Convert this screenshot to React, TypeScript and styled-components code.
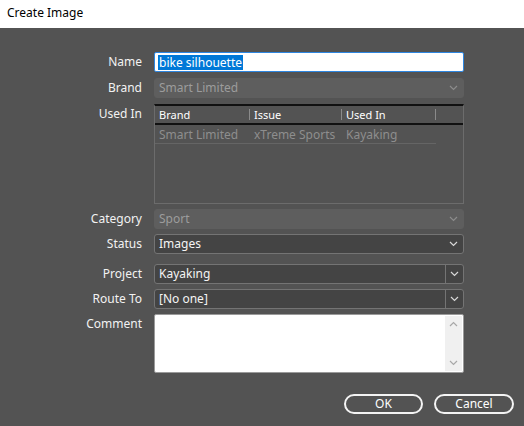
import React from "react";
import styled, { createGlobalStyle } from "styled-components";

const Global = createGlobalStyle`
  html, body { margin: 0; padding: 0; background: #535353; }
  body { font-family: "Noto Sans", "Open Sans", sans-serif; font-size: 12px; }
  * { box-sizing: border-box; }
`;

const Window = styled.div`
  width: 524px;
  height: 426px;
  display: flex;
  flex-direction: column;
  background: #535353;
  overflow: hidden;
`;

const TitleBar = styled.div`
  height: 28px;
  background: #ffffff;
  color: #000;
  display: flex;
  align-items: center;
  padding: 0 0 3px 7px;
  font-size: 12px;
`;

const Form = styled.div`
  display: grid;
  grid-template-columns: 142px 310px;
  column-gap: 12px;
  padding-top: 24px;
`;

const Label = styled.div<{ $mt?: number }>`
  margin-top: ${(p) => p.$mt ?? 0}px;
  text-align: right;
  color: #f2f2f2;
  line-height: 20px;
  height: 20px;
  white-space: nowrap;
`;

const Field = styled.div<{ $mt?: number }>`
  margin-top: ${(p) => p.$mt ?? 0}px;
`;

const NameInput = styled.div`
  height: 20px;
  background: #fff;
  border: 1px solid #2e86e0;
  border-radius: 2px;
  display: flex;
  align-items: center;
  padding-left: 3px;
`;

const Selected = styled.span`
  background: #0078d7;
  color: #fff;
  line-height: 15px;
  padding: 0 1px;
`;

const Select = styled.div<{ $disabled?: boolean }>`
  height: 20px;
  display: flex;
  align-items: center;
  border-radius: 3px;
  background: ${(p) => (p.$disabled ? "#5e5e5e" : "#444444")};
  border: 1px solid ${(p) => (p.$disabled ? "#5e5e5e" : "#747474")};
  color: ${(p) => (p.$disabled ? "#9c9c9c" : "#f4f4f4")};
  padding-left: 4px;
`;

const SelectText = styled.div`
  flex: 1;
  line-height: 18px;
`;

const Arrow = styled.div<{ $split?: boolean; $dim?: boolean }>`
  width: ${(p) => (p.$split ? 18 : 20)}px;
  height: 100%;
  display: flex;
  align-items: center;
  justify-content: center;
  border-left: ${(p) => (p.$split ? "1px solid #747474" : "none")};
  color: ${(p) => (p.$dim ? "#8c8c8c" : "#d8d8d8")};
`;

const Chevron = ({ up }: { up?: boolean }) => (
  <svg width="9" height="6" viewBox="0 0 9 6">
    <path
      d={up ? "M1 5 L4.5 1.5 L8 5" : "M1 1 L4.5 4.5 L8 1"}
      fill="none"
      stroke="currentColor"
      strokeWidth="1.2"
    />
  </svg>
);

const Table = styled.div`
  height: 100px;
  border: 1px solid #6c6c6c;
  border-top: 2px solid #111;
  background: #535353;
`;

const HeaderRow = styled.div`
  display: grid;
  grid-template-columns: 95px 92px 94px;
  height: 19px;
  border-bottom: 2px solid #111;
`;

const HeaderCell = styled.div`
  color: #ffffff;
  font-size: 11px;
  line-height: 17px;
  padding-left: 4px;
  position: relative;
  &::after {
    content: "";
    position: absolute;
    right: 0;
    top: 3px;
    bottom: 3px;
    width: 1px;
    background: #8a8a8a;
  }
`;

const DataRow = styled.div`
  display: grid;
  grid-template-columns: 95px 92px 94px;
  width: 281px;
  height: 19px;
  border-bottom: 1px solid #656565;
`;

const DataCell = styled.div`
  color: #8e8e8e;
  line-height: 19px;
  padding-left: 4px;
  white-space: nowrap;
`;

const TextArea = styled.div`
  height: 59px;
  background: #fff;
  border: 1px solid #9a9a9a;
  border-radius: 2px;
  display: flex;
  justify-content: flex-end;
`;

const ScrollBar = styled.div`
  width: 17px;
  margin: 1px 1px 1px 0;
  background: #f0f0f0;
  display: flex;
  flex-direction: column;
  justify-content: space-between;
  align-items: center;
  padding: 5px 0;
  color: #a8a8a8;
`;

const Footer = styled.div`
  display: flex;
  justify-content: flex-end;
  gap: 11px;
  padding: 21px 10px 0 0;
`;

const Button = styled.button<{ $w: number }>`
  width: ${(p) => p.$w}px;
  height: 20px;
  border: 2px solid #f4f4f4;
  border-radius: 10px;
  background: transparent;
  color: #fff;
  font-family: "Noto Sans", "Open Sans", sans-serif;
  font-size: 12px;
  line-height: 14px;
  padding: 0;
`;

export default function App() {
  return (
    <Window>
      <Global />
      <TitleBar>Create Image</TitleBar>
      <Form>
        <Label>Name</Label>
        <Field>
          <NameInput>
            <Selected>bike silhouette</Selected>
          </NameInput>
        </Field>

        <Label $mt={6}>Brand</Label>
        <Field $mt={6}>
          <Select $disabled>
            <SelectText>Smart Limited</SelectText>
            <Arrow $dim>
              <Chevron />
            </Arrow>
          </Select>
        </Field>

        <Label $mt={6}>Used In</Label>
        <Field $mt={6}>
          <Table>
            <HeaderRow>
              <HeaderCell>Brand</HeaderCell>
              <HeaderCell>Issue</HeaderCell>
              <HeaderCell>Used In</HeaderCell>
            </HeaderRow>
            <DataRow>
              <DataCell>Smart Limited</DataCell>
              <DataCell>xTreme Sports</DataCell>
              <DataCell>Kayaking</DataCell>
            </DataRow>
          </Table>
        </Field>

        <Label $mt={5}>Category</Label>
        <Field $mt={5}>
          <Select $disabled>
            <SelectText>Sport</SelectText>
            <Arrow $dim>
              <Chevron />
            </Arrow>
          </Select>
        </Field>

        <Label $mt={5}>Status</Label>
        <Field $mt={5}>
          <Select>
            <SelectText>Images</SelectText>
            <Arrow>
              <Chevron />
            </Arrow>
          </Select>
        </Field>

        <Label $mt={10}>Project</Label>
        <Field $mt={10}>
          <Select>
            <SelectText>Kayaking</SelectText>
            <Arrow $split>
              <Chevron />
            </Arrow>
          </Select>
        </Field>

        <Label $mt={5}>Route To</Label>
        <Field $mt={5}>
          <Select>
            <SelectText>[No one]</SelectText>
            <Arrow $split>
              <Chevron />
            </Arrow>
          </Select>
        </Field>

        <Label $mt={5}>Comment</Label>
        <Field $mt={5}>
          <TextArea>
            <ScrollBar>
              <Chevron up />
              <Chevron />
            </ScrollBar>
          </TextArea>
        </Field>
      </Form>
      <Footer>
        <Button $w={79}>OK</Button>
        <Button $w={80}>Cancel</Button>
      </Footer>
    </Window>
  );
}
